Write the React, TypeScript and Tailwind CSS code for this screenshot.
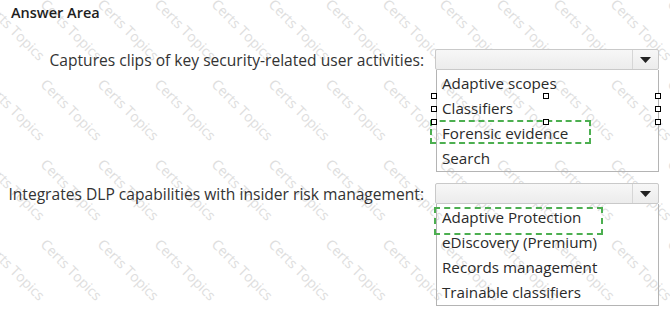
import React from 'react';

const FONT = { fontFamily: '"Open Sans", "Noto Sans", sans-serif' };

const firstOptions = ['Adaptive scopes', 'Classifiers', 'Forensic evidence', 'Search'];
const secondOptions = ['Adaptive Protection', 'eDiscovery (Premium)', 'Records management', 'Trainable classifiers'];

function Select() {
  return (
    <div className="flex h-[21px] rounded-[2px] border border-[#c9c9c9] bg-gradient-to-b from-[#f7f7f7] to-[#ececec]">
      <div className="flex-1" />
      <div className="flex w-[26px] items-center justify-center border-l border-[#d6d6d6]">
        <svg width="11" height="6" viewBox="0 0 11 6">
          <path d="M0 0 L11 0 L5.5 6 Z" fill="#222" />
        </svg>
      </div>
    </div>
  );
}

function ListBox({ options }: { options: string[] }) {
  return (
    <div className="ml-[1px] flex h-[102px] flex-col border-x border-b border-[#b4b4b4] pl-[5px] pt-[1px]">
      {options.map((o) => (
        <div key={o} className="h-[25px] text-[15.2px] leading-[25px] text-[#2a2a2a]">
          {o}
        </div>
      ))}
    </div>
  );
}

function Handle({ x, y }: { x: number; y: number }) {
  return (
    <div
      className="absolute h-[6px] w-[6px] border border-black bg-white"
      style={{ left: x - 3, top: y - 3 }}
    />
  );
}

// faint diagonal watermark laid over the page
function Watermark() {
  const cols = Array.from({ length: 13 });
  const rows = Array.from({ length: 5 });
  return (
    <div className="pointer-events-none absolute inset-0 overflow-hidden">
      {rows.map((_, r) =>
        cols.map((_, c) => (
          <div
            key={`${r}-${c}`}
            className="absolute whitespace-nowrap text-[14px] text-[#dedede]"
            style={{ left: c * 57 - 6, top: r * 80 - 6, transform: 'rotate(45deg)', transformOrigin: 'left top' }}
          >
            Certs Topics
          </div>
        ))
      )}
    </div>
  );
}

export default function App() {
  return (
    <div className="relative h-[313px] w-[670px] overflow-hidden bg-white" style={FONT}>
      <Watermark />
      <div className="relative">
        <div className="pl-[11px] pt-[4px] text-[14.5px] font-semibold leading-[18px] text-[#1e1e1e]">
          Answer Area
        </div>

        <div className="mt-[27px] flex">
          <div className="w-[424px] pt-[1px] text-right text-[15.6px] leading-[20px] text-[#333]">
            Captures clips of key security-related user activities:
          </div>
          <div className="ml-[11px] w-[224px]">
            <Select />
            <ListBox options={firstOptions} />
          </div>
        </div>

        <div className="mt-[11px] flex">
          <div className="w-[424px] pt-[1px] text-right text-[15.6px] leading-[20px] text-[#333]">
            Integrates DLP capabilities with insider risk management:
          </div>
          <div className="ml-[11px] w-[224px]">
            <Select />
            <ListBox options={secondOptions} />
          </div>
        </div>
      </div>

      <div className="absolute left-[430px] top-[120px] h-[24px] w-[161px] border-2 border-dashed border-[#4caf50]" />
      <div className="absolute left-[434px] top-[207px] h-[28px] w-[169px] border-2 border-dashed border-[#4caf50]" />

      <Handle x={434} y={96} />
      <Handle x={546} y={96} />
      <Handle x={658} y={96} />
      <Handle x={434} y={109} />
      <Handle x={658} y={109} />
      <Handle x={434} y={122} />
      <Handle x={546} y={122} />
      <Handle x={658} y={122} />
    </div>
  );
}
